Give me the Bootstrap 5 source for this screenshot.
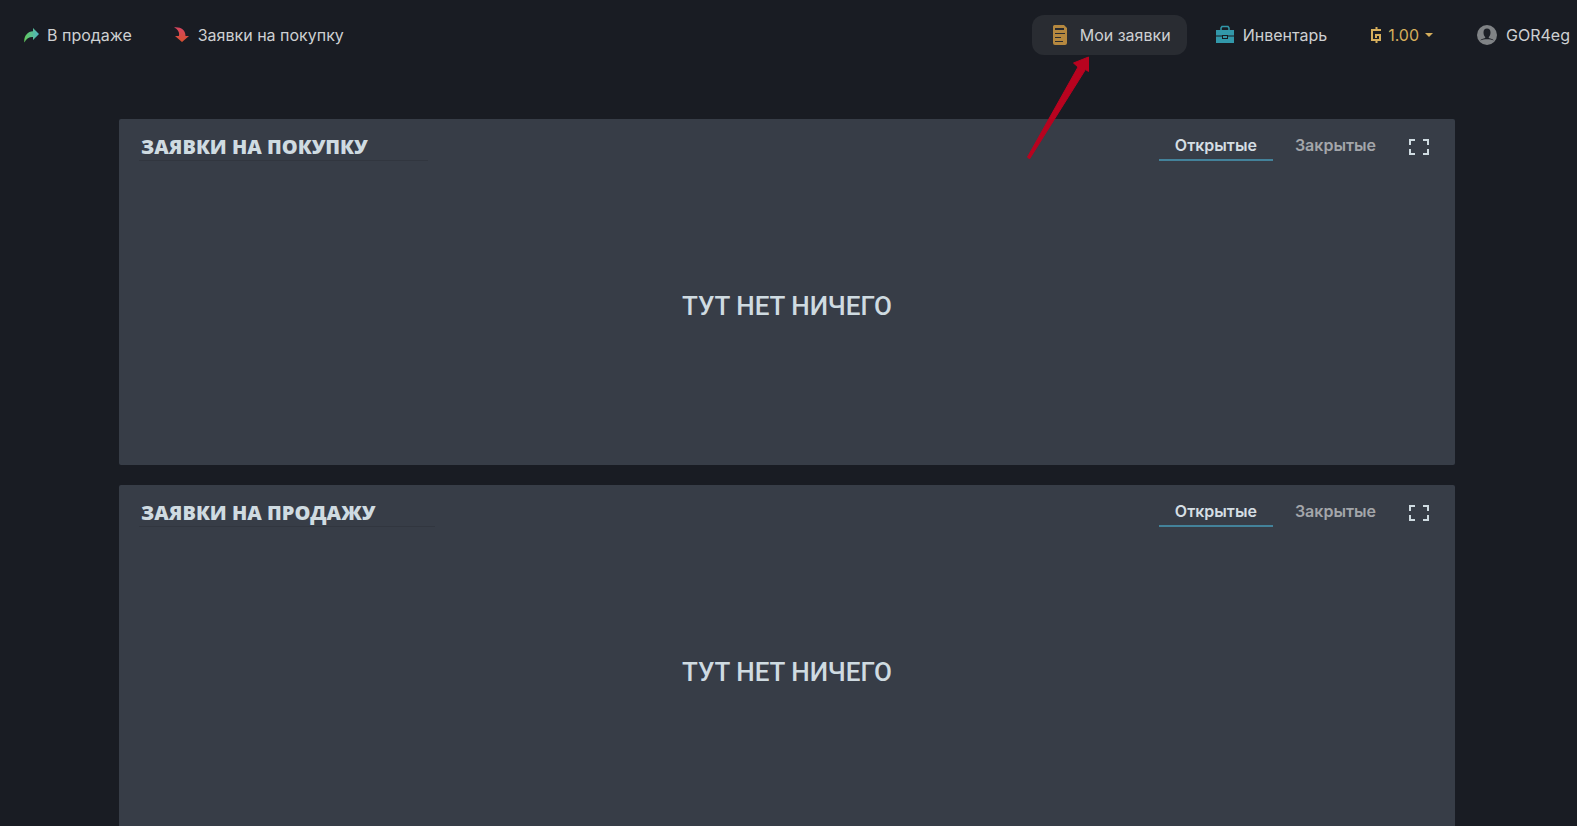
<!DOCTYPE html>
<html lang="ru" data-bs-theme="dark">
<head>
<meta charset="utf-8">
<meta name="viewport" content="width=device-width, initial-scale=1">
<title>Мои заявки</title>
<link href="https://cdn.jsdelivr.net/npm/bootstrap@5.3.0/dist/css/bootstrap.min.css" rel="stylesheet">
<style>
html { scrollbar-width: none; }
html::-webkit-scrollbar { display: none; }
body { background: #191c23; color: #ced0d2; font-family: Inter, sans-serif; font-size: 16px; line-height: 24px; }
.topbar { height: 70px; padding: 0 7px 0 4px; }
.topbar a, .topbar button { color: inherit; font-size: 16px; line-height: 24px; height: 40px; padding: 0 16px 0 20px; border-radius: 12px; white-space: nowrap; border: 0; }
.topbar .is-current { background: #292c32; }
.topbar .money { color: #d5ae5c; }
.topbar .money svg { margin-right: 6px; }
.topbar .money::after { margin-left: 6px; border-width: 4px 4px 0; }
.topbar .profile { padding-right: 0; gap: 9px; }
.market { gap: 6px; }
.pointer { left: -7px; top: 39px; z-index: 2; pointer-events: none; }
.orders { padding: 49px 122px 0 119px; gap: 20px; }
.panel { background: #373d47; border-radius: 2px; height: 346px; color: #cfdbe1; }
.panel-top { padding: 14px 22px 0 20px; }
.panel h2 { color: #cfdbe1; font-family: "Open Sans", sans-serif; font-weight: 800; font-size: 20px; line-height: 27px; padding: 0 60px 0 2px; border-bottom: 1px solid #31363f; text-transform: uppercase; }
.tabs { gap: 6px; }
.tab { font-weight: 600; font-size: 16px; line-height: 24px; padding: 0 16px 2px; border: 0; border-bottom: 2px solid transparent; background: none; color: #a3a6aa; }
.tab.active { color: #d5dee3; border-color: #43829a; }
.expand { margin-left: 13px; color: #cfdbe1; line-height: 0; }
.blank { font-family: Roboto, sans-serif; font-weight: 500; font-size: 26px; line-height: 32px; padding-bottom: 14px; }
</style>
</head>
<body>
<nav class="topbar d-flex align-items-center justify-content-between" aria-label="Главное меню">
  <div class="market d-flex">
    <a href="#" class="d-flex align-items-center gap-2 text-decoration-none">
      <svg width="15" height="15" viewBox="0 0 15 15"><defs><linearGradient id="g1"><stop stop-color="#62c95a"/><stop offset="1" stop-color="#4fb5c4"/></linearGradient></defs><path fill="url(#g1)" d="M9 0l6 6-6 6V9C5.500 8.700 2.500 10.500.3 14.500-.3 8 3.500 3.600 9 3.300z"/></svg>
      В продаже</a>
    <a href="#" class="d-flex align-items-center gap-2 text-decoration-none">
      <svg width="16" height="16" viewBox="0 0 16 16"><defs><linearGradient id="g2" x2="0" y2="1"><stop stop-color="#d64561"/><stop offset="1" stop-color="#d6502f"/></linearGradient></defs><path fill="url(#g2)" d="M0 .3C7-.3 11.500 3 11.500 9H15l-7 6-7-6h3.800C5.800 6 4.600 3 0 .3z"/></svg>
      Заявки на покупку</a>
  </div>
  <div class="d-flex">
    <div class="position-relative">
      <a href="#" class="is-current d-flex align-items-center text-decoration-none" aria-current="page">
        <svg class="me-2" width="20" height="20" viewBox="0 0 20 20"><path fill="#b5883f" d="M2.500 0H12l3 3v15a2 2 0 0 1-2 2H3a2 2 0 0 1-2-2V1.500A1.500 1.500 0 0 1 2.500 0z"/><path stroke="#292c32" fill="none" d="M3 8.500h10M3 12.500h6M3 16.500h8"/><path stroke="#292c32" stroke-width="2" d="M3 4h9"/></svg>
        Мои заявки</a>
      <svg class="pointer position-absolute" width="68" height="108" viewBox="0 0 68 108" aria-hidden="true"><path fill="#b8031f" stroke="#b8031f" stroke-linejoin="round" d="M63.500 3L48.500 9l4.500 4L2.500 103l2 2L60.500 15.500l3 2z"/></svg>
    </div>
    <a href="#" class="d-flex align-items-center text-decoration-none ms-2">
      <svg class="me-2" width="20" height="20" viewBox="0 0 20 20"><path fill="none" stroke="#3298aa" d="M6 5.500V3l1-1.500h6L14 3v2.500" stroke-width="1.500"/><path fill="#3298aa" fill-rule="evenodd" d="M1 5h18v5.500h-6V10H7v.5H1zM1 11.500h6V14h6v-2.500h6V18H1zM8 11h4v2H8z"/></svg>
      Инвентарь</a>
    <div class="dropdown mx-2">
      <button class="money btn d-flex align-items-center dropdown-toggle" data-bs-toggle="dropdown" type="button">
        <svg width="11" height="16" viewBox="0 0 11 16"><path fill="none" stroke="#d5ae5c" stroke-width="2" d="M10 3H1v10h8V8H5v3M5.500 0v3M5.500 13v3"/></svg>
        1.00</button>
    </div>
    <a href="#" class="profile d-flex align-items-center text-decoration-none">
      <svg width="20" height="20" viewBox="0 0 20 20"><circle cx="10" cy="10" r="10" fill="#808386"/><path fill="#1d2027" d="M10 3.500c2.300 0 3.500 1.600 3.500 4 0 2.200-.8 3.800-1.700 4.500v1c2 .5 4.200 1 5 2.500-1.800-.9-4.300-1.300-6.800-1.300s-5 .4-6.800 1.300c.8-1.500 3-2 5-2.500v-1C7.300 11.300 6.500 9.700 6.500 7.500c0-2.400 1.200-4 3.500-4z"/></svg>
      GOR4eg</a>
  </div>
</nav>
<main class="orders d-flex flex-column">
  <section class="panel d-flex flex-column">
    <header class="panel-top d-flex justify-content-between align-items-start">
      <h2 class="m-0">Заявки на покупку</h2>
      <div class="d-flex align-items-center">
        <div class="tabs d-flex" role="tablist"><button type="button" class="tab active" role="tab" aria-selected="true">Открытые</button><button type="button" class="tab" role="tab" aria-selected="false">Закрытые</button></div>
        <button type="button" class="expand btn border-0 p-1" aria-label="Развернуть"><svg width="20" height="16" viewBox="0 0 20 16" fill="none" stroke="currentColor" stroke-width="2"><path d="M6 1H1v5M14 1h5v5M6 15H1v-5M14 15h5v-5"/></svg></button>
      </div>
    </header>
    <p class="blank m-0 flex-grow-1 d-flex align-items-center justify-content-center">ТУТ НЕТ НИЧЕГО</p>
  </section>
  <section class="panel d-flex flex-column">
    <header class="panel-top d-flex justify-content-between align-items-start">
      <h2 class="m-0">Заявки на продажу</h2>
      <div class="d-flex align-items-center">
        <div class="tabs d-flex" role="tablist"><button type="button" class="tab active" role="tab" aria-selected="true">Открытые</button><button type="button" class="tab" role="tab" aria-selected="false">Закрытые</button></div>
        <button type="button" class="expand btn border-0 p-1" aria-label="Развернуть"><svg width="20" height="16" viewBox="0 0 20 16" fill="none" stroke="currentColor" stroke-width="2"><path d="M6 1H1v5M14 1h5v5M6 15H1v-5M14 15h5v-5"/></svg></button>
      </div>
    </header>
    <p class="blank m-0 flex-grow-1 d-flex align-items-center justify-content-center">ТУТ НЕТ НИЧЕГО</p>
  </section>
</main>
<script src="https://cdn.jsdelivr.net/npm/bootstrap@5.3.0/dist/js/bootstrap.bundle.min.js"></script>
</body>
</html>
